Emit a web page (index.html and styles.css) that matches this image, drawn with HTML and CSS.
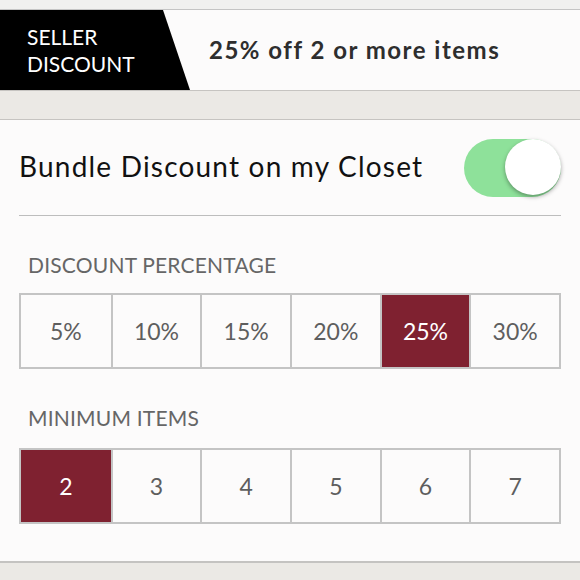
FILE: index.html
```html
<!DOCTYPE html>
<html>
<head>
<meta charset="utf-8">
<link rel="stylesheet" href="styles.css">
</head>
<body>
<div class="topstrip"></div>
<div class="banner">
  <div class="tag"><span>SELLER<br>DISCOUNT</span></div>
  <div class="headline">25% off 2 or more items</div>
</div>
<div class="gap"></div>
<div class="card">
  <div class="toggle-row">
    <div class="toggle-label">Bundle Discount on my Closet</div>
    <div class="switch"><div class="knob"></div></div>
  </div>
  <div class="section-label first">DISCOUNT PERCENTAGE</div>
  <div class="options">
    <div class="opt">5%</div>
    <div class="opt">10%</div>
    <div class="opt">15%</div>
    <div class="opt">20%</div>
    <div class="opt sel">25%</div>
    <div class="opt">30%</div>
  </div>
  <div class="section-label second">MINIMUM ITEMS</div>
  <div class="options">
    <div class="opt sel">2</div>
    <div class="opt">3</div>
    <div class="opt">4</div>
    <div class="opt">5</div>
    <div class="opt">6</div>
    <div class="opt">7</div>
  </div>
</div>
</body>
</html>
```
FILE: styles.css
```css
html, body {
  margin: 0;
  padding: 0;
}
body {
  width: 580px;
  height: 580px;
  overflow: hidden;
  background: #ebe9e5;
  font-family: "Lato", "Open Sans", sans-serif;
}
.topstrip {
  height: 9px;
  background: #f0f0ef;
  border-bottom: 1px solid #c4c4c4;
}
.banner {
  height: 80px;
  display: flex;
  align-items: center;
  background: #fcfbfb;
  border-bottom: 1px solid #c6c4c1;
}
.tag {
  width: 190px;
  height: 100%;
  background: #000;
  clip-path: polygon(0 0, 163px 0, 190px 100%, 0 100%);
  display: flex;
  align-items: center;
  color: #fff;
  font-size: 21px;
  line-height: 27px;
  padding-left: 27px;
  box-sizing: border-box;
}
.headline {
  margin-left: 19px;
  padding-bottom: 2px;
  font-size: 24px;
  font-weight: 700;
  letter-spacing: 1.5px;
  color: #2e2e2e;
}
.gap {
  height: 28px;
  border-bottom: 1px solid #c6c4c1;
}
.card {
  background: #fcfbfb;
  padding: 0 19px 37px;
  border-bottom: 2px solid #c4c3c1;
}
.toggle-row {
  height: 95px;
  display: flex;
  align-items: center;
  justify-content: space-between;
  border-bottom: 1px solid #bdbdbd;
}
.toggle-label {
  font-size: 28px;
  letter-spacing: 1.2px;
  color: #111;
  padding-bottom: 3px;
}
.switch {
  width: 97px;
  height: 58px;
  border-radius: 29px;
  background: #8ee19a;
  display: flex;
  justify-content: flex-end;
  align-items: center;
}
.knob {
  width: 56px;
  height: 56px;
  border-radius: 50%;
  background: #fff;
  margin-top: -2px;
  box-shadow: 0 2px 4px rgba(0,0,0,0.35);
}
.section-label {
  padding-left: 9px;
  font-size: 21px;
  line-height: 24px;
  letter-spacing: 0.2px;
  color: #666;
}
.section-label.first {
  padding-top: 37px;
  margin-bottom: 16px;
}
.section-label.second {
  padding-top: 37px;
  margin-bottom: 18px;
}
.options {
  display: grid;
  grid-template-columns: repeat(6, 1fr);
  border: 2px solid #c4c4c4;
  height: 72px;
}
.opt {
  display: flex;
  align-items: center;
  justify-content: center;
  font-size: 23px;
  color: #5e5e5e;
  border-left: 2px solid #c4c4c4;
}
.opt:first-child {
  border-left: none;
}
.opt.sel {
  background: #7f2130;
  color: #fff;
}
```
